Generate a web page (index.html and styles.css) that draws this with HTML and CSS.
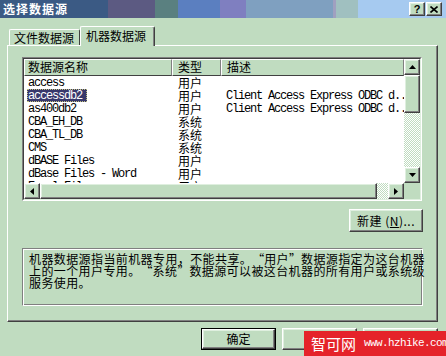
FILE: index.html
```html
<!DOCTYPE html>
<html lang="zh-CN">
<head>
<meta charset="utf-8">
<title>选择数据源</title>
<link rel="stylesheet" href="styles.css">
</head>
<body>
<div class=titlebar>
  <span class=title>选择数据源</span>
  <span class="tbtn bevel">?</span>
  <span class="tbtn bevel"><svg width="8" height="7" viewBox="0 0 8 7"><path d="M0.5 0.5 L7.5 6.5 M7.5 0.5 L0.5 6.5" stroke="#000" stroke-width="1.6"/></svg></span>
</div>
<div class=tabs>
  <span class=tab>文件数据源</span>
  <span class="tab active">机器数据源</span>
</div>
<div class=panel>
  <div class=list>
    <div class=list-in>
      <div class=view>
        <div class="row head"><span>数据源名称</span><span>类型</span><span>描述</span></div>
        <div class=row><span class=nm>access</span><span class=ty>用户</span><span class=ds></span></div>
        <div class=row><span class=nm><span class=sel>accessdb2</span></span><span class=ty>用户</span><span class=ds>Client Access Express ODBC d..</span></div>
        <div class=row><span class=nm>as400db2</span><span class=ty>用户</span><span class=ds>Client Access Express ODBC d..</span></div>
        <div class=row><span class=nm>CBA_EH_DB</span><span class=ty>系统</span><span class=ds></span></div>
        <div class=row><span class=nm>CBA_TL_DB</span><span class=ty>系统</span><span class=ds></span></div>
        <div class=row><span class=nm>CMS</span><span class=ty>系统</span><span class=ds></span></div>
        <div class=row><span class=nm>dBASE Files</span><span class=ty>用户</span><span class=ds></span></div>
        <div class=row><span class=nm>dBase Files - Word</span><span class=ty>用户</span><span class=ds></span></div>
        <div class=row><span class=nm>Excel Files</span><span class=ty>用户</span><span class=ds></span></div>
      </div>
      <div class=vscroll>
        <span class="sbtn bevel"><svg width="7" height="4" viewBox="0 0 7 4"><path d="M3.5 0 L7 4 L0 4 Z"/></svg></span>
        <span class="thumb bevel v"></span>
        <span class=track></span>
        <span class="sbtn bevel"><svg width="7" height="4" viewBox="0 0 7 4"><path d="M0 0 L7 0 L3.5 4 Z"/></svg></span>
      </div>
      <div class=hscroll>
        <span class="sbtn bevel"><svg width="4" height="7" viewBox="0 0 4 7"><path d="M4 0 L4 7 L0 3.5 Z"/></svg></span>
        <span class="thumb bevel h"></span>
        <span class=track></span>
        <span class="sbtn bevel"><svg width="4" height="7" viewBox="0 0 4 7"><path d="M0 0 L4 3.5 L0 7 Z"/></svg></span>
      </div>
      <div class=corner></div>
    </div>
  </div>
  <div class=actions><span class="btn bevel wide">新建 (<u>N</u>)...</span></div>
  <div class=note>机器数据源指当前机器专用，不能共享。<span class="q o">“</span>用户<span class="q c">”</span>数据源指定为这台机器<br>上的一个用户专用。<span class="q o">“</span>系统<span class="q c">”</span>数据源可以被这台机器的所有用户或系统级<br>服务使用。</div>
</div>
<div class=footer>
  <span class="btn default"><span class="btn bevel">确定</span></span>
  <span class="btn bevel">取消</span>
  <span class="btn bevel">应用(<u>A</u>)</span>
</div>
<div class=watermark><span class=wm-cn>智可网</span><span class=wm-url>www.hzhike.com</span></div>
</body>
</html>
```
FILE: styles.css
```css
* { box-sizing : border-box }

body {
  margin : 0;
  width : 446px;
  height : 356px;
  overflow : hidden;
  position : relative;
  background : #C0DCC0;
  color : #000;
  font : 12px/14px "Noto Sans CJK SC", sans-serif
}

.bevel {
  background : #C0DCC0;
  border : 1px solid;
  border-color : #FFF #404040 #404040 #FFF;
  box-shadow : inset -1px -1px #808080, inset 1px 1px #DFEFDF
}

/* title bar */
.titlebar {
  height : 18px;
  display : flex;
  align-items : center;
  gap : 1px;
  padding : 0 4px 0 3px;
  background : linear-gradient(to right,
    #3B5A84 0 108px, #5C5A82 108px 155px, #5A8080 155px 178px,
    #5B7FC0 178px 220px, #7F7FC0 220px 246px, #7FA0C0 246px 333px,
    #A0A0C0 333px 336px, #A0C0C0 336px 358px, #A6CAF0 358px)
}
.title {
  flex : 1;
  color : #FFF;
  font-weight : bold;
  letter-spacing : 1px
}
.tbtn {
  width : 16px;
  height : 14px;
  display : flex;
  align-items : center;
  justify-content : center;
  font : bold 11px/1 "Liberation Sans", sans-serif
}

/* tabs */
.tabs {
  height : 27px;
  display : flex;
  align-items : flex-end;
  padding-left : 9px
}
.tab {
  height : 16px;
  width : 71px;
  padding-left : 4px;
  line-height : 15px;
  border : 1px solid #FFF;
  border-bottom : none;
  border-right-color : #404040;
  border-radius : 2px 2px 0 0
}
.tab.active {
  width : 75px;
  height : 20px;
  padding-left : 5px;
  line-height : 17px;
  margin-bottom : -1px;
  position : relative;
  z-index : 1;
  background : #C0DCC0;
  box-shadow : inset -1px 0 #808080
}

/* tab page */
.panel {
  margin-left : 7px;
  width : 431px;
  height : 277px;
  padding : 11px 15px 0 14px;
  border : 1px solid;
  border-color : #FFF #404040 #404040 #FFF;
  box-shadow : inset -1px -1px #808080
}

.list {
  width : 400px;
  height : 144px;
  border : 1px solid;
  border-color : #808080 #FFF #FFF #808080
}
.list-in {
  height : 100%;
  display : grid;
  grid-template-columns : 380px 16px;
  grid-template-rows : 124px 16px;
  background : #FFF;
  border : 1px solid;
  border-color : #404040 #DFEFDF #DFEFDF #404040
}
.view { overflow : hidden }

.row {
  display : grid;
  grid-template-columns : 148px 49px 183px;
  height : 13px;
  white-space : nowrap
}
.row > span {
  display : block;
  height : 13px;
  line-height : 13px
}
.row > .nm, .row > .ds {
  font : 12px/15px "Liberation Mono", monospace;
  letter-spacing : -1.2px
}
.nm { padding-left : 4px }
.ty { padding-left : 6px }
.ds { padding-left : 5px }
.sel {
  display : inline-block;
  vertical-align : top;
  height : 13px;
  line-height : 15px;
  margin-left : -1px;
  padding : 0 5px 0 1px;
  background : #38386C;
  color : #FFF;
  outline : 1px dotted #C0C080;
  outline-offset : -1px
}

.row.head { height : 17px }
.row.head span {
  height : 17px;
  line-height : 14px;
  background : #C0DCC0;
  border : 1px solid;
  border-color : #FFF #808080 #404040 #FFF;
  padding-left : 3px
}
.row.head span + span { padding-left : 5px }

.vscroll, .hscroll { display : flex }
.vscroll { flex-direction : column }
.sbtn {
  flex : none;
  width : 16px;
  height : 16px;
  display : flex;
  align-items : center;
  justify-content : center
}
.thumb { flex : none }
.thumb.v { height : 38px }
.thumb.h { width : 337px }
.track {
  flex : 1;
  background : repeating-conic-gradient(#FFF 0 25%, #C0DCC0 0 50%) 0 0 / 2px 2px
}
.corner { background : #C0DCC0 }

.actions {
  display : flex;
  justify-content : flex-end;
  margin-top : 8px
}
.btn {
  height : 22px;
  width : 75px;
  display : inline-flex;
  align-items : center;
  justify-content : center;
  line-height : 1;
  white-space : pre
}
.btn.wide {
  width : 74px;
  height : 23px;
  margin-right : -1px;
  letter-spacing : 0.5px
}

.note {
  margin-top : 16px;
  width : 401px;
  height : 58px;
  padding : 4px 0 0 6px;
  line-height : 12px;
  letter-spacing : 0.4px;
  white-space : nowrap;
  border : 1px solid;
  border-color : #808080 #FFF #FFF #808080;
  box-shadow : inset 1px 1px #FFF, inset -1px -1px #808080
}
.q {
  display : inline-block;
  width : 12px
}
.q.o { text-align : right }
.q.c { text-align : left }

.footer {
  display : flex;
  justify-content : flex-end;
  gap : 6px;
  padding : 6px 8px 0 0
}
.btn.default {
  border : 1px solid #000;
  width : 75px
}
.btn.default .btn {
  width : 73px;
  height : 20px
}

.watermark {
  position : absolute;
  right : 0;
  bottom : 0;
  width : 142px;
  height : 25px;
  background : #E5232A;
  color : #FFF;
  display : flex;
  align-items : center;
  padding-left : 7px;
  gap : 8px;
  white-space : nowrap
}
.wm-cn { font-size : 15px; line-height : 1 }
.wm-url {
  font : 11px/1 "Liberation Mono", monospace;
  letter-spacing : -0.6px
}
```
